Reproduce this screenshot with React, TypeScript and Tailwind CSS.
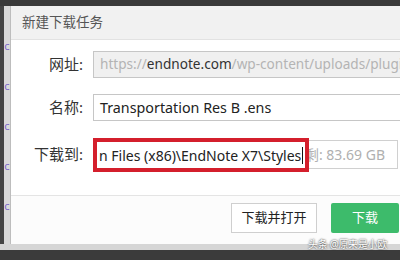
export default function App() {
  const marks = ["c", "c", "c", "c", "c"]

  return (
    <main
      className="relative flex h-[260px] w-[400px] flex-col overflow-hidden bg-[#3b3b3b]"
      style={{ fontFamily: '"Noto Sans", "Noto Sans CJK SC", sans-serif' }}
    >
      <div className="h-[6px] shrink-0 bg-[#3a3a3a]" />

      <div className="flex h-[238px] shrink-0">
        {/* page behind the dialog */}
        <div className="flex w-[10px] shrink-0">
          <div className="w-[4px] bg-[#454545]" />
          <div className="flex w-[6px] flex-col items-center bg-[#d9d9d9] pt-[34px] text-[11px] leading-none text-[#7b68c8]">
            {marks.map((m, i) => (
              <span key={i} className="mb-[29px]">
                {m}
              </span>
            ))}
          </div>
        </div>

        {/* dialog */}
        <section className="flex w-[400px] shrink-0 flex-col border-l border-[#bdbdbd] bg-white">
          <div className="flex h-[34px] shrink-0 items-center border-b border-[#e2e2e2] bg-[#f1f1f1] pl-[11px] text-[13.5px] text-[#555]">
            新建下载任务
          </div>

          <div className="flex h-[155px] shrink-0 flex-col pt-[11px]">
            <div className="flex h-[27px] items-center">
              <span className="w-[72px] shrink-0 text-right text-[15px] text-[#333]">网址:</span>
              <div className="ml-[10px] flex h-[27px] flex-1 items-center overflow-hidden whitespace-nowrap border border-[#c6c6c6] bg-[#f0f0f0] pl-[6px] text-[13.6px] text-[#b4b4b4]">
                https://<span className="text-[#333]">endnote.com</span>/wp-content/uploads/plugi
              </div>
            </div>

            <div className="mt-[16px] flex h-[27px] items-center">
              <span className="w-[72px] shrink-0 text-right text-[15px] text-[#333]">名称:</span>
              <div className="ml-[10px] flex h-[27px] flex-1 items-center overflow-hidden whitespace-nowrap border border-[#c6c6c6] bg-white pl-[6px] text-[14.3px] text-[#222]">
                Transportation Res B .ens
              </div>
            </div>

            <div className="mt-[19px] flex h-[29px] items-center">
              <span className="w-[72px] shrink-0 text-right text-[15px] text-[#333]">下载到:</span>
              <div className="relative ml-[10px] flex h-[29px] w-[305px] shrink-0 items-center justify-between whitespace-nowrap border border-[#d0d0d0] bg-white pl-[5px] pr-[12px] text-[14px]">
                <span className="text-[#222]">
                  n Files (x86)\EndNote X7\Styles<span className="ml-[1px] inline-block h-[17px] w-px translate-y-[3px] bg-[#111]" />
                </span>
                <span className="text-[#b0b0b0]">剩: 83.69 GB</span>
                <div className="absolute left-[-1px] top-[-3px] h-[34px] w-[216px] border-[4px] border-[#d41f2c]" />
              </div>
            </div>
          </div>

          <div className="flex flex-1 items-start gap-[14px] border-t border-[#e4e4e4] bg-[#fcfcfc] pt-[7px] pl-[220px]">
            <button className="h-[30px] w-[86px] border border-[#cfcfcf] bg-white text-[13px] text-[#222]">
              下载并打开
            </button>
            <button className="h-[30px] w-[68px] rounded-[2px] bg-[#3dbb6b] text-[13px] text-white">
              下载
            </button>
          </div>
        </section>
      </div>

      <div className="h-[6px] shrink-0 bg-[#d6d6d6]" />
      <div className="flex-1 bg-[#3b3b3b]" />

      <span className="absolute left-[308px] top-[237px] whitespace-nowrap text-[10px] tracking-[-0.3px] text-white [text-shadow:0_0_2px_#000]">
        头条 @原来是小欧
      </span>
    </main>
  )
}
